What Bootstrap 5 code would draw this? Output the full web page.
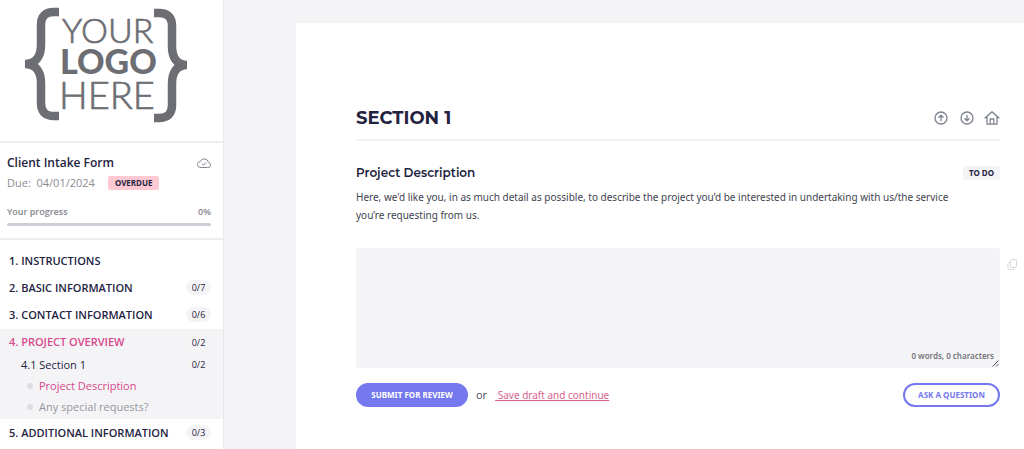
<!DOCTYPE html>
<html lang="en">
<head>
<meta charset="utf-8">
<meta name="viewport" content="width=device-width, initial-scale=1">
<title>Client Intake Form</title>
<link href="https://cdn.jsdelivr.net/npm/bootstrap@5.3.0/dist/css/bootstrap.min.css" rel="stylesheet">
<style>
  :root { --ink: #23233f; --pink: #d8498c; --soft: #f4f4f6; --violet: #7578ee; --line: #ededf0; }
  body { font-family: "Open Sans", "Noto Sans", sans-serif; font-size: 11px; line-height: 18px; color: #4a4e5c; background: var(--soft); }
  .sidebar { width: 224px; border-right: 1px solid #e9e9ec; color: var(--ink); }
  .brand { height: 143px; padding: 7px 0 0 24px; border-bottom: 2px solid var(--line); }
  .form-info { height: 97px; padding: 10px 12px 0 7px; border-bottom: 2px solid var(--line); }
  .form-name { font-size: 12px; font-weight: 600; line-height: 20px; margin: 0; }
  .due { color: #8b8d94; line-height: 20px; }
  .tag, .pill, .prompt, .draft, .counter { font-family: "Noto Sans", "Open Sans", sans-serif; }
  .tag { font-size: 8px; font-weight: 700; line-height: 14px; border-radius: 2px; color: var(--ink); }
  .tag-overdue { background: #ffc9d3; padding: 0 7px; margin-left: 13px; }
  .tag-todo { background: var(--soft); padding: 0 6px; }
  .progress-text { font-size: 9px; font-weight: 600; color: #84868e; margin-top: 10px; }
  .progress { height: 3px; margin-top: 2px; background: #cdced5; }
  .sections a { display: flex; align-items: center; justify-content: space-between; height: 27px; padding: 0 12px 0 9px; color: var(--ink); font-weight: 600; text-decoration: none; }
  .sections { padding-top: 7px; }
  .sections .current { background: var(--soft); padding: 1px 0 2px; margin-top: 1px; }
  .sections .current a { height: 21px; }
  .sections .current > a:first-child { height: 24px; }
  .sections a.chosen { color: var(--pink); }
  .sections a.sub { padding-left: 21px; font-weight: 500; }
  .sections a.question { padding-left: 27px; justify-content: flex-start; gap: 6px; font-weight: 500; }
  .sections a.muted { color: #94969c; font-weight: 400; }
  .bullet { width: 6px; height: 6px; border-radius: 50%; background: #dddee2; }
  .count { min-width: 25px; text-align: center; font-size: 9px; font-weight: 500; line-height: 15px; border-radius: 8px; background: var(--soft); color: var(--ink); }
  .sheet { margin: 23px 0 0 72px; padding: 83px 24px 40px 60px; }
  .sheet-head { height: 35px; border-bottom: 2px solid #f1f1f3; }
  h1, h2 { font-family: Montserrat, "Inter", sans-serif; color: var(--ink); margin: 0; }
  h1 { font-size: 18px; font-weight: 700; line-height: 24px; }
  h2 { font-size: 12px; font-weight: 600; line-height: 20px; }
  .icon-btn { border: 0; background: none; padding: 0; display: flex; color: #7e828f; }
  .question-head { margin-top: 22px; }
  .prompt { font-size: 10px; margin: 5px 0 0; color: #40434f; }
  .answer { margin-top: 24px; }
  .answer textarea { display: block; width: 100%; height: 120px; border: 0; border-radius: 3px; background: var(--soft); resize: none; padding: 8px; }
  .counter { right: 6px; bottom: 3px; font-size: 8px; font-weight: 600; color: #74767e; }
  .grip { right: 1px; bottom: 1px; }
  .copy { right: -18px; top: 10px; color: #d9dadd; }
  .actions { margin-top: 15px; }
  .pill { height: 24px; padding: 0 11px; border: 2px solid var(--violet); border-radius: 12px; font-size: 8px; font-weight: 700; line-height: 20px; }
  .pill-solid { background: var(--violet); color: #fff; min-width: 112px; }
  .pill-line { background: #fff; color: var(--violet); min-width: 97px; }
  .draft { color: #d8628f; white-space: pre; font-size: 10px; }
</style>
</head>
<body>
<div class="d-flex min-vh-100">
  <aside class="sidebar bg-white flex-shrink-0">
    <div class="brand">
      <svg width="166" height="118" viewBox="0 0 166 118" fill="#6d6e73" role="img" aria-label="Your logo here">
        <g fill="none" stroke="#6d6e73" stroke-width="8.500">
          <path d="M35 5H30Q17 5 17 18V38C17 49 12 57 1 57C12 57 17 65 17 76V96Q17 109 30 109H35"/>
          <path d="M130 6H135Q148 6 148 19V39C148 50 152 58 163 58C152 58 148 66 148 77V98Q148 111 135 111H130"/>
        </g>
        <g font-family="Lato, sans-serif" stroke="#6d6e73">
          <text x="38" y="36" font-size="34" font-weight="300" stroke-width="0.700">YOUR</text>
          <text x="36" y="67" font-size="34" font-weight="900" stroke="none">LOGO</text>
          <text x="35" y="102" font-size="38" font-weight="300" stroke-width="0.700">HERE</text>
        </g>
      </svg>
    </div>
    <div class="form-info">
      <div class="d-flex justify-content-between align-items-center">
        <p class="form-name">Client Intake Form</p>
        <svg width="14" height="12" viewBox="0 0 14 12" fill="none" stroke="#85878f" stroke-linecap="round" stroke-linejoin="round"><path d="M3.500 10.500H10.500A2.500 2.500 0 0 0 11.500 5.500A4.300 4.300 0 0 0 3.300 4.500A3 3 0 0 0 3.500 10.500ZM5.200 7L6.500 8.200L9 5.700"/></svg>
      </div>
      <div class="due d-flex align-items-center">Due:&nbsp; 04/01/2024 <span class="tag tag-overdue">OVERDUE</span></div>
      <div class="progress-text d-flex justify-content-between"><span>Your progress</span><span>0%</span></div>
      <div class="progress" role="progressbar" aria-label="Your progress" aria-valuenow="0" aria-valuemin="0" aria-valuemax="100"></div>
    </div>
    <nav class="sections">
      <a href="#">1. INSTRUCTIONS</a>
      <a href="#">2. BASIC INFORMATION <span class="count">0/7</span></a>
      <a href="#">3. CONTACT INFORMATION <span class="count">0/6</span></a>
      <div class="current">
        <a href="#" class="chosen">4. PROJECT OVERVIEW <span class="count">0/2</span></a>
        <a href="#" class="sub">4.1 Section 1 <span class="count">0/2</span></a>
        <a href="#" class="question chosen"><span class="bullet"></span>Project Description</a>
        <a href="#" class="question muted"><span class="bullet"></span>Any special requests?</a>
      </div>
      <a href="#">5. ADDITIONAL INFORMATION <span class="count">0/3</span></a>
    </nav>
  </aside>
  <main class="flex-grow-1 d-flex">
    <div class="sheet bg-white flex-grow-1">
      <div class="sheet-head d-flex justify-content-between align-items-start">
        <h1>SECTION 1</h1>
        <div class="d-flex gap-2 align-items-center pt-1">
          <button type="button" class="icon-btn" aria-label="Previous section"><svg width="18" height="16" viewBox="0 0 18 16" fill="none" stroke="currentColor" stroke-width="1.300" stroke-linecap="round" stroke-linejoin="round"><circle cx="9" cy="8" r="6"/><path d="M9 10.700V5.300M6.900 7.300L9 5.200L11.100 7.300"/></svg></button>
          <button type="button" class="icon-btn" aria-label="Next section"><svg width="18" height="16" viewBox="0 0 18 16" fill="none" stroke="currentColor" stroke-width="1.300" stroke-linecap="round" stroke-linejoin="round"><circle cx="9" cy="8" r="6"/><path d="M9 5.300V10.700M6.900 8.700L9 10.800L11.100 8.700"/></svg></button>
          <button type="button" class="icon-btn" aria-label="Home"><svg width="16" height="16" viewBox="0 0 16 16" fill="none" stroke="currentColor" stroke-width="1.300" stroke-linecap="round" stroke-linejoin="round"><path d="M1 8L8 1.700L15 8M3 6.500V14.200H13V6.500M6.200 14V9H9.800V14"/></svg></button>
        </div>
      </div>
      <div class="question-head d-flex justify-content-between align-items-center">
        <h2><label for="answer">Project Description</label></h2>
        <span class="tag tag-todo">TO DO</span>
      </div>
      <p class="prompt">Here, we'd like you, in as much detail as possible, to describe the project you’d be interested in undertaking with us/the service<br>you’re requesting from us.</p>
      <div class="answer position-relative">
        <textarea id="answer"></textarea>
        <span class="counter position-absolute">0 words, 0 characters</span>
        <svg class="grip position-absolute" width="7" height="7" viewBox="0 0 7 7" stroke="#55575e"><path d="M0.500 6.500L6.500 0.500M4 6.500L6.500 4"/></svg>
        <button type="button" class="icon-btn copy position-absolute" aria-label="Copy"><svg width="11" height="13" viewBox="0 0 11 13" fill="none" stroke="currentColor" stroke-linejoin="round"><rect x="3.500" y="1.500" width="6" height="8" rx="1.500"/><path d="M3.500 4.500H2A1 1 0 0 0 1 5.500V10.500A1 1 0 0 0 2 11.500H6A1 1 0 0 0 7 10.500V9.500"/></svg></button>
      </div>
      <div class="actions d-flex align-items-center">
        <button type="button" class="pill pill-solid">SUBMIT FOR REVIEW</button>
        <span class="mx-2">or</span>
        <a href="#" class="draft"> Save draft and continue</a>
        <button type="button" class="pill pill-line ms-auto">ASK A QUESTION</button>
      </div>
    </div>
  </main>
</div>
<script src="https://cdn.jsdelivr.net/npm/bootstrap@5.3.0/dist/js/bootstrap.bundle.min.js"></script>
</body>
</html>
